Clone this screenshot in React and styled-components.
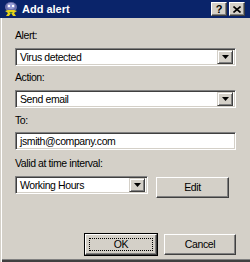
import React from 'react';
import styled, { createGlobalStyle } from 'styled-components';

const GlobalStyle = createGlobalStyle`
  html, body {
    margin: 0;
    padding: 0;
    background: #d4d0c8;
  }
`;

const Window = styled.div`
  width: 250px;
  height: 262px;
  box-sizing: border-box;
  background: #d4d0c8;
  font-family: 'Liberation Sans', Arial, sans-serif;
  font-size: 10.5px;
  letter-spacing: -0.4px;
  color: #000;
  display: flex;
  flex-direction: column;
  box-shadow: inset 1px 0 0 #d4d0c8, inset 2px 0 0 #fff, inset 0 -2px 0 #404040,
    inset 0 -3px 0 #808080;
  overflow: hidden;
`;

const TitleBar = styled.div`
  height: 18px;
  background: #0a246a;
  display: flex;
  align-items: center;
  padding: 0 3px 0 3px;
  gap: 3px;
`;

const TitleText = styled.div`
  flex: 1;
  color: #fff;
  font-weight: bold;
  font-size: 11px;
  letter-spacing: 0;
  line-height: 13px;
  padding-top: 1px;
`;

const CaptionButtons = styled.div`
  display: flex;
  gap: 2px;
  margin-right: 2px;
`;

const CaptionButton = styled.div`
  width: 14px;
  height: 12px;
  background: #d4d0c8;
  border: 1px solid;
  border-color: #fff #404040 #404040 #fff;
  box-shadow: inset -1px -1px 0 #808080;
  display: flex;
  align-items: center;
  justify-content: center;
  font-weight: bold;
  font-size: 11px;
  letter-spacing: 0;
  line-height: 12px;
`;

const Body = styled.div`
  flex: 1;
  display: flex;
  flex-direction: column;
  padding: 11px 14px 0 15px;
`;

const Label = styled.div`
  height: 13px;
  line-height: 13px;
  margin-bottom: ${(p) => p.$gap || 6}px;
`;

const Sunken = styled.div`
  box-sizing: border-box;
  width: ${(p) => p.$width || 221}px;
  height: 18px;
  background: #fff;
  border: 1px solid;
  border-color: #808080 #fff #fff #808080;
  box-shadow: inset 1px 1px 0 #404040, inset -1px -1px 0 #d4d0c8;
  padding: 2px;
  display: flex;
  align-items: center;
  margin-bottom: ${(p) => p.$gap || 5}px;
`;

const FieldText = styled.div`
  flex: 1;
  padding-left: 2px;
  line-height: 13px;
  white-space: nowrap;
`;

const ArrowButton = styled.div`
  box-sizing: border-box;
  width: 16px;
  height: 14px;
  background: #d4d0c8;
  border: 1px solid;
  border-color: #d4d0c8 #404040 #404040 #d4d0c8;
  box-shadow: inset 1px 1px 0 #fff, inset -1px -1px 0 #808080;
  display: flex;
  align-items: center;
  justify-content: center;
`;

const Row = styled.div`
  display: flex;
  align-items: center;
  gap: 8px;
`;

const Button = styled.div`
  position: relative;
  box-sizing: border-box;
  width: ${(p) => p.$width || 73}px;
  height: ${(p) => p.$height || 21}px;
  background: #d4d0c8;
  border: 1px solid;
  border-color: #fff #404040 #404040 #fff;
  box-shadow: inset -1px -1px 0 #808080, inset 1px 1px 0 #d4d0c8;
  display: flex;
  align-items: center;
  justify-content: center;
  line-height: 13px;
`;

const DefaultButton = styled.div`
  position: relative;
  box-sizing: border-box;
  width: 74px;
  height: 23px;
  border: 1px solid #000;
  background: #d4d0c8;
  display: flex;

  & > div {
    flex: 1;
    border: 1px solid;
    border-color: #fff #404040 #404040 #fff;
    box-shadow: inset -1px -1px 0 #808080;
    display: flex;
    align-items: center;
    justify-content: center;
    line-height: 13px;
  }

  &::after {
    content: '';
    position: absolute;
    left: 4px;
    top: 4px;
    right: 4px;
    bottom: 4px;
    border: 1px dotted #000;
  }
`;

const Footer = styled.div`
  margin-top: 34px;
  display: flex;
  justify-content: flex-end;
  align-items: center;
  gap: 6px;
`;

const Arrow = () => (
  <svg width="7" height="4" viewBox="0 0 7 4">
    <path d="M0 0h7L3.5 4z" fill="#000" />
  </svg>
);

const AppIcon = () => (
  <svg width="16" height="16" viewBox="0 0 16 16">
    <ellipse cx="8" cy="6" rx="6" ry="5" fill="#6b6fa8" />
    <ellipse cx="8" cy="5" rx="4" ry="3" fill="#9aa0d8" />
    <rect x="5" y="4" width="2" height="2" fill="#fff" />
    <rect x="9" y="4" width="2" height="2" fill="#fff" />
    <path d="M2 10l3 2-2 3h3l2-3 2 3h3l-2-3 3-2-3-1H5z" fill="#e6d21a" />
    <path d="M6 11h4l-2 2z" fill="#4a8a2a" />
  </svg>
);

const Combo = ({ value, width, gap }) => (
  <Sunken $width={width} $gap={gap}>
    <FieldText>{value}</FieldText>
    <ArrowButton>
      <Arrow />
    </ArrowButton>
  </Sunken>
);

export default function App() {
  return (
    <>
      <GlobalStyle />
      <Window>
        <TitleBar>
          <AppIcon />
          <TitleText>Add alert</TitleText>
          <CaptionButtons>
            <CaptionButton>?</CaptionButton>
            <CaptionButton>
              <svg width="8" height="7" viewBox="0 0 8 7">
                <path d="M0.5 0.5l7 6M7.5 0.5l-7 6" stroke="#000" strokeWidth="1.6" />
              </svg>
            </CaptionButton>
          </CaptionButtons>
        </TitleBar>
        <Body>
          <Label>Alert:</Label>
          <Combo value="Virus detected" />
          <Label>Action:</Label>
          <Combo value="Send email" gap={6} />
          <Label $gap={5}>To:</Label>
          <Sunken $gap={7}>
            <FieldText>jsmith@company.com</FieldText>
          </Sunken>
          <Label>Valid at time interval:</Label>
          <Row>
            <Combo value="Working Hours" width={133} gap={0} />
            <Button $width={73}>Edit</Button>
          </Row>
          <Footer>
            <DefaultButton>
              <div>OK</div>
            </DefaultButton>
            <Button $width={72}>Cancel</Button>
          </Footer>
        </Body>
      </Window>
    </>
  );
}
